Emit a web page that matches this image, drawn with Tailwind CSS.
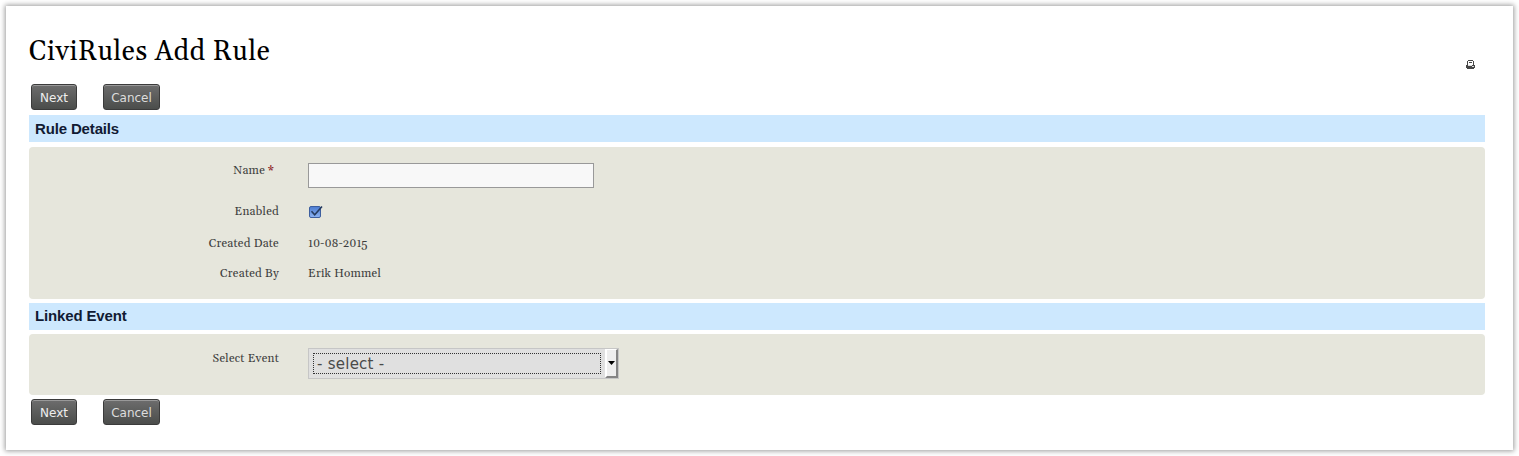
<!DOCTYPE html>
<html lang="en">
<head>
<meta charset="utf-8">
<title>CiviRules Add Rule</title>
<script src="https://cdn.jsdelivr.net/npm/@tailwindcss/browser@4"></script>
</head>
<body class="h-[456px] overflow-hidden bg-white p-1.5 font-['Georgia','Gelasio','Liberation_Serif',serif] text-[11.7px] leading-4 tracking-[0.25px] text-[#3e3e3e]">
<main class="h-[444px] w-[1507px] bg-white pl-[23px] pr-[28px] pt-[26px] shadow-[0_0_5px_1px_rgba(0,0,0,0.4)]">
  <header class="flex h-[52px] justify-between">
    <h1 class="mt-0.5 whitespace-nowrap text-[27px] leading-9 tracking-[0.58px] text-black">CiviRules Add Rule</h1>
    <svg class="mr-[10px] mt-7 h-[9px] w-[9px]" viewBox="0 0 9 9" shape-rendering="crispEdges" aria-label="Print">
      <path fill="#fff" d="M2 1h5v4H2z"/>
      <path fill="#474747" d="M2 0h5v1H2zM1 1h1v4H1zM7 1h1v4H7zM3 2h3v1H3zM0 5h9v3H0zM1 8h7v1H1z"/>
      <path fill="#ddd" d="M2 5h4v1H2zM6 6h2v1H6z"/>
    </svg>
  </header>
  <div class="flex h-[31px] gap-[26px] pl-0.5 font-['DejaVu_Sans',sans-serif] text-xs tracking-normal text-[#eee] [text-shadow:0_1px_0_black]">
    <button class="h-[26px] w-[46px] rounded-[3px] border border-[#3b3b3b] bg-linear-to-b from-[#6d6d6d] to-[#4b4d4b] pt-px shadow-[inset_0_1px_0_#999]">Next</button>
    <button class="h-[26px] w-[57px] rounded-[3px] border border-[#3b3b3b] bg-linear-to-b from-[#6d6d6d] to-[#4b4d4b] pt-px text-[#ddd] shadow-[inset_0_1px_0_#999]">Cancel</button>
  </div>
  <h2 class="h-[27px] bg-[#cde8fe] pl-1.5 font-['Liberation_Sans',sans-serif] text-[15px] font-bold leading-[27px] tracking-[-0.15px] text-[#111b33]">Rule Details</h2>
  <section class="mt-[5px] h-[152px] rounded bg-[#e6e6dc] pt-4">
    <div class="flex h-[41px]"><label class="mr-[34px] w-[245px] text-right">Name <span class="font-bold text-[#8b2020]">*</span></label><input class="h-[25px] w-[286px] border border-[#999] bg-[#f8f8f8]"></div>
    <div class="flex h-8"><label class="mr-[29px] w-[250px] text-right">Enabled</label>
      <svg class="mt-px h-[14px] w-[15px]" viewBox="0 0 15 14"><defs><linearGradient id="check-fill" x2="0" y2="1"><stop stop-color="#4b7bd0"/><stop offset="1" stop-color="#8db4f3"/></linearGradient></defs><rect x="1.5" y="1.5" width="11" height="11" rx="1.5" fill="url(#check-fill)" stroke="#3d5f9f"/><path d="M3.5 6.2l3.2 3.6L14 1.5" fill="none" stroke="#263c60" stroke-width="1.6"/></svg>
    </div>
    <div class="flex h-[30px]"><span class="mr-[29px] w-[250px] text-right">Created Date</span><span class="tracking-[-0.05px]">10-08-2015</span></div>
    <div class="flex"><span class="mr-[29px] w-[250px] text-right">Created By</span><span>Erik Hommel</span></div>
  </section>
  <h2 class="mt-1 h-[27px] bg-[#cde8fe] pl-1.5 font-['Liberation_Sans',sans-serif] text-[15px] font-bold leading-[25px] tracking-[-0.15px] text-[#111b33]">Linked Event</h2>
  <section class="mt-1 flex h-[61px] rounded bg-[#e6e6dc] pt-3.5">
    <label class="mr-[29px] mt-[3px] w-[250px] text-right">Select Event</label>
    <div class="flex h-[31px] w-[311px] border border-[#c6c6c6] bg-[#e0e0e0] font-['DejaVu_Sans',sans-serif] text-[15px] text-[#4a4a4a]">
      <span class="ml-1 mt-1 h-[21px] w-[288px] border border-dotted border-[#333] pl-[3px] leading-[21px]">- select -</span>
      <span class="ml-1 flex h-[29px] w-[13px] items-center justify-center border-b-2 border-r-2 border-l-2 border-t border-b-[#858585] border-l-white border-r-[#858585] border-t-white bg-[#eee]"><svg class="h-1 w-[7px] shrink-0" viewBox="0 0 7 4"><path d="M0 0h7L3.5 4z"/></svg></span>
    </div>
  </section>
  <div class="mt-1 flex gap-[26px] pl-0.5 font-['DejaVu_Sans',sans-serif] text-xs tracking-normal text-[#eee] [text-shadow:0_1px_0_black]">
    <button class="h-[26px] w-[46px] rounded-[3px] border border-[#3b3b3b] bg-linear-to-b from-[#6d6d6d] to-[#4b4d4b] pt-px shadow-[inset_0_1px_0_#999]">Next</button>
    <button class="h-[26px] w-[57px] rounded-[3px] border border-[#3b3b3b] bg-linear-to-b from-[#6d6d6d] to-[#4b4d4b] pt-px text-[#ddd] shadow-[inset_0_1px_0_#999]">Cancel</button>
  </div>
</main>
</body>
</html>
